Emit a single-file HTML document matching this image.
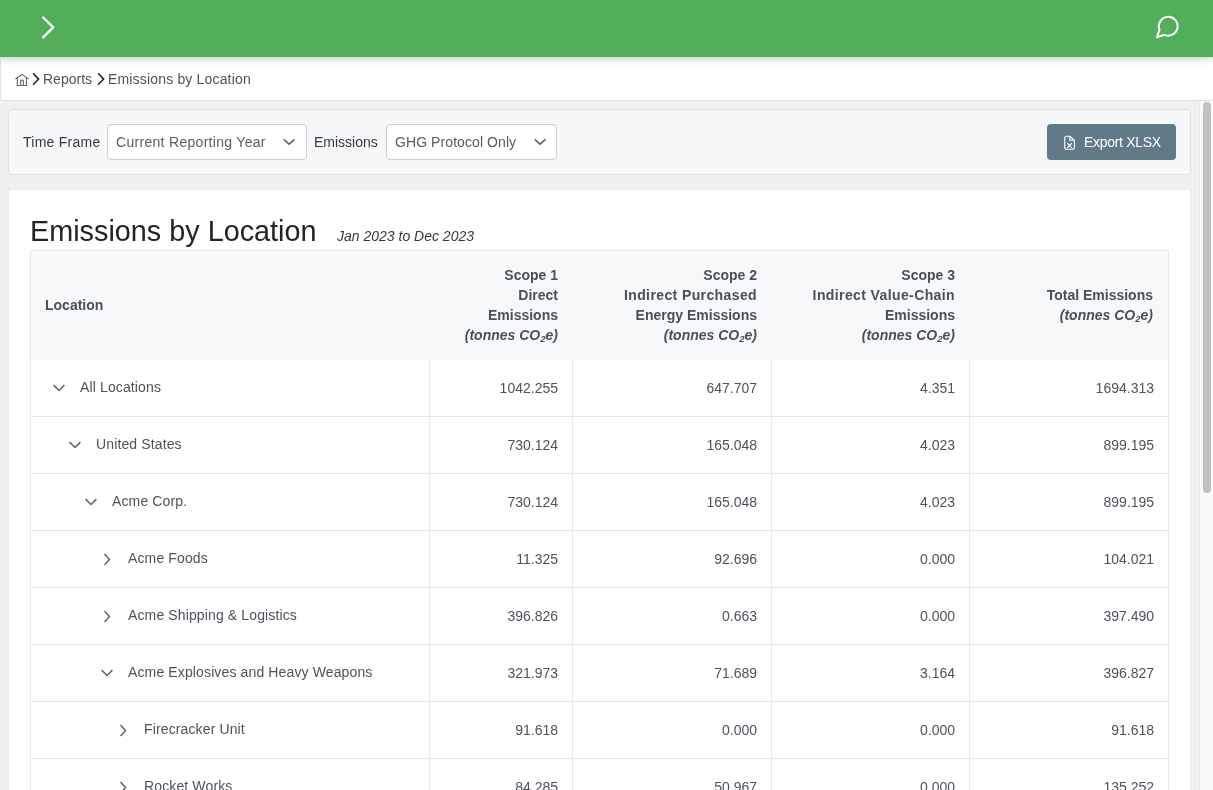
<!DOCTYPE html>
<html>
<head>
<meta charset="utf-8">
<style>
*{box-sizing:border-box;margin:0;padding:0}
html,body{width:1213px;height:790px;overflow:hidden;background:#f0f0f0;font-family:"Liberation Sans",sans-serif;font-size:14px;color:#495057}
.topbar{position:absolute;left:0;top:0;width:1213px;height:57px;background:#53ae5a;z-index:3;box-shadow:0 2px 8px rgba(0,0,0,.2)}
.topbar svg{position:absolute}
.crumb{position:absolute;left:0;top:56px;width:1215px;height:45px;background:#fff;border:1px solid #dee2e6;border-radius:4px;z-index:2}
.crumb .t{position:absolute;top:12px;line-height:20px;color:#4b535c}
.crumb svg{position:absolute}
.main{position:absolute;left:0;top:101px;width:1199px;height:689px;overflow:hidden}
.sb{position:absolute;left:1199px;top:101px;width:14px;height:689px;background:#fafafa;border-left:1px solid #e8e8e8}
.thumb{position:absolute;left:1203px;top:102px;width:8px;height:391px;background:#c1c1c1;border-radius:4px}
.filters{position:absolute;left:8px;top:8px;width:1183px;height:66px;background:#f6f7f9;border:1px solid #dde1e6;border-radius:4px}
.lbl{position:absolute;top:22px;line-height:20px;color:#343a40}
.sel{position:absolute;top:14px;height:36px;background:#fff;border:1px solid #c9ced6;border-radius:4px;color:#555c64}
.sel .v{position:absolute;left:8px;top:7px;line-height:20px;white-space:nowrap}
.sel svg{position:absolute;top:13px}
.btn{position:absolute;left:1038px;top:14px;width:129px;height:36px;background:#607b87;border-radius:4px;color:#fff}
.btn .v{position:absolute;left:37px;top:8px;line-height:20px;white-space:nowrap;letter-spacing:-.3px}
.btn svg{position:absolute;left:15px;top:10px}
.card{position:absolute;left:8px;top:88px;width:1183px;height:700px;background:#fff;border:1px solid #ebebeb}
h1{position:absolute;left:21px;top:21px;font-size:28.8px;font-weight:normal;line-height:40px;color:#212529;white-space:nowrap}
.date{position:absolute;left:328px;top:36px;font-style:italic;line-height:20px;color:#343a40;white-space:nowrap}
table{position:absolute;left:21px;top:60px;border-collapse:separate;border-spacing:0;table-layout:fixed;width:1139px}
th{background:#f7f8fa;font-weight:bold;color:#495057;line-height:20px;height:110px;padding:14px 15px 15px 14px;text-align:right;vertical-align:middle;border-top:1px solid #e5e8ec}
th:first-child{text-align:left;border-left:1px solid #e5e8ec}
th:last-child{border-right:1px solid #e5e8ec}
th i{font-style:italic}
.s2{font-size:9.5px;line-height:1;position:relative;top:1.5px;font-weight:bold}
.ls{letter-spacing:.39px}
td{height:57px;border-right:1px solid #e5e9ed;border-bottom:1px solid #e5e9ed;padding:0 14px;text-align:right;line-height:20px;color:#4b535c;vertical-align:top;padding-top:18px}
td:first-child{text-align:left;position:relative;border-left:1px solid #e5e9ed}
td .nm{position:absolute;top:17px;white-space:nowrap;letter-spacing:.13px}
td svg{position:absolute;fill:none;stroke:#5b646e;stroke-width:1.5}
td svg.cd,td svg.cr{top:22px}
</style>
</head>
<body><div style="will-change:transform;position:absolute;left:0;top:0;width:1213px;height:790px">
<div class="topbar">
  <svg style="left:38px;top:13px" width="20" height="28" viewBox="0 0 20 28"><path d="M5.1 4.5 L15.3 14.4 L5.1 24.4" fill="none" stroke="#fff" stroke-width="2.4" stroke-linecap="round" stroke-linejoin="round"/></svg>
  <svg style="left:1153px;top:13px" width="30" height="28" viewBox="0 0 30 28"><path d="M11.4 21.8 L4.0 24.2 L6.5 16.7 A9.4 9.4 0 1 1 11.4 21.8 Z" fill="none" stroke="#fff" stroke-width="2" stroke-linejoin="round"/></svg>
</div>
<div class="crumb">
  <svg style="left:14px;top:15px" width="16" height="16" viewBox="0 0 16 16"><path d="M0.8 6.6 L6.9 2.3 L13.1 6.6 M2.3 6 V13.5 H11.5 V6 M5.7 13.5 V8.3 H8.3 V13.5" fill="none" stroke="#5b656f" stroke-width="1.1" stroke-linejoin="miter" stroke-linecap="round"/></svg>
  <svg style="left:31px;top:15px" width="10" height="14" viewBox="0 0 10 14"><path d="M1.5 1.8 L6.6 7.1 L1.5 12.3" fill="none" stroke="#212529" stroke-width="1.6" stroke-linecap="round"/></svg>
  <span class="t" style="left:42px">Reports</span>
  <svg style="left:96px;top:15px" width="10" height="14" viewBox="0 0 10 14"><path d="M1.5 1.8 L6.6 7.1 L1.5 12.3" fill="none" stroke="#212529" stroke-width="1.6" stroke-linecap="round"/></svg>
  <span class="t" style="left:107px;letter-spacing:.17px">Emissions by Location</span>
</div>
<div class="main">
  <div class="filters">
    <span class="lbl" style="left:14px;letter-spacing:.25px">Time Frame</span>
    <div class="sel" style="left:98px;width:200px"><span class="v" style="letter-spacing:.3px">Current Reporting Year</span>
      <svg style="left:175px" width="13" height="9" viewBox="0 0 13 9"><path d="M0.8 1.3 L6.1 6.2 L11.5 1.3" fill="none" stroke="#5a6470" stroke-width="1.6"/></svg></div>
    <span class="lbl" style="left:305px">Emissions</span>
    <div class="sel" style="left:377px;width:171px"><span class="v" style="letter-spacing:.08px">GHG Protocol Only</span>
      <svg style="left:147px" width="13" height="9" viewBox="0 0 13 9"><path d="M0.8 1.3 L6.1 6.2 L11.5 1.3" fill="none" stroke="#5a6470" stroke-width="1.6"/></svg></div>
    <div class="btn">
      <svg width="16" height="18" viewBox="0 0 16 18"><path d="M4.7 2.3 H8.2 L12.4 6.5 V13.3 Q12.4 15.3 10.4 15.3 H4.7 Q2.7 15.3 2.7 13.3 V4.3 Q2.7 2.3 4.7 2.3 Z M7.8 2.5 V6.3 H12.2 M5.5 9.5 L9.5 13.5 M9.5 9.5 L5.5 13.5" fill="none" stroke="#fff" stroke-width="1.1" stroke-linejoin="round" stroke-linecap="round"/></svg>
      <span class="v">Export XLSX</span>
    </div>
  </div>
  <div class="card">
    <h1>Emissions by Location</h1>
    <span class="date">Jan 2023 to Dec 2023</span>
    <table>
      <colgroup><col style="width:400px"><col style="width:143px"><col style="width:199px"><col style="width:198px"><col style="width:199px"></colgroup>
      <thead><tr>
        <th>Location</th>
        <th>Scope 1<br>Direct<br>Emissions<br><i>(tonnes CO<b class="s2">2</b>e)</i></th>
        <th>Scope 2<br><span class="ls">Indirect Purchased</span><br>Energy Emissions<br><i>(tonnes CO<b class="s2">2</b>e)</i></th>
        <th>Scope 3<br><span class="ls">Indirect Value-Chain</span><br>Emissions<br><i>(tonnes CO<b class="s2">2</b>e)</i></th>
        <th>Total Emissions<br><i>(tonnes CO<b class="s2">2</b>e)</i></th>
      </tr></thead>
      <tbody id="tb">
<tr><td><svg class="cd" style="left:20px" width="16" height="16" viewBox="0 0 16 16"><path d="M2.6 3.1 L8 8.5 L13.4 3.1"/></svg><span class="nm" style="left:49px">All Locations</span></td><td>1042.255</td><td>647.707</td><td>4.351</td><td>1694.313</td></tr>
<tr><td><svg class="cd" style="left:36px" width="16" height="16" viewBox="0 0 16 16"><path d="M2.6 3.1 L8 8.5 L13.4 3.1"/></svg><span class="nm" style="left:65px">United States</span></td><td>730.124</td><td>165.048</td><td>4.023</td><td>899.195</td></tr>
<tr><td><svg class="cd" style="left:52px" width="16" height="16" viewBox="0 0 16 16"><path d="M2.6 3.1 L8 8.5 L13.4 3.1"/></svg><span class="nm" style="left:81px">Acme Corp.</span></td><td>730.124</td><td>165.048</td><td>4.023</td><td>899.195</td></tr>
<tr><td><svg class="cr" style="left:68px" width="16" height="16" viewBox="0 0 16 16"><path d="M5.5 1 L10.5 6.5 L5.5 12"/></svg><span class="nm" style="left:97px">Acme Foods</span></td><td>11.325</td><td>92.696</td><td>0.000</td><td>104.021</td></tr>
<tr><td><svg class="cr" style="left:68px" width="16" height="16" viewBox="0 0 16 16"><path d="M5.5 1 L10.5 6.5 L5.5 12"/></svg><span class="nm" style="left:97px">Acme Shipping &amp; Logistics</span></td><td>396.826</td><td>0.663</td><td>0.000</td><td>397.490</td></tr>
<tr><td><svg class="cd" style="left:68px" width="16" height="16" viewBox="0 0 16 16"><path d="M2.6 3.1 L8 8.5 L13.4 3.1"/></svg><span class="nm" style="left:97px">Acme Explosives and Heavy Weapons</span></td><td>321.973</td><td>71.689</td><td>3.164</td><td>396.827</td></tr>
<tr><td><svg class="cr" style="left:84px" width="16" height="16" viewBox="0 0 16 16"><path d="M5.5 1 L10.5 6.5 L5.5 12"/></svg><span class="nm" style="left:113px">Firecracker Unit</span></td><td>91.618</td><td>0.000</td><td>0.000</td><td>91.618</td></tr>
<tr><td><svg class="cr" style="left:84px" width="16" height="16" viewBox="0 0 16 16"><path d="M5.5 1 L10.5 6.5 L5.5 12"/></svg><span class="nm" style="left:113px">Rocket Works</span></td><td>84.285</td><td>50.967</td><td>0.000</td><td>135.252</td></tr>
</tbody>
    </table>
  </div>
</div>
<div class="sb"></div>
<div class="thumb"></div>
</div></body>
</html>
